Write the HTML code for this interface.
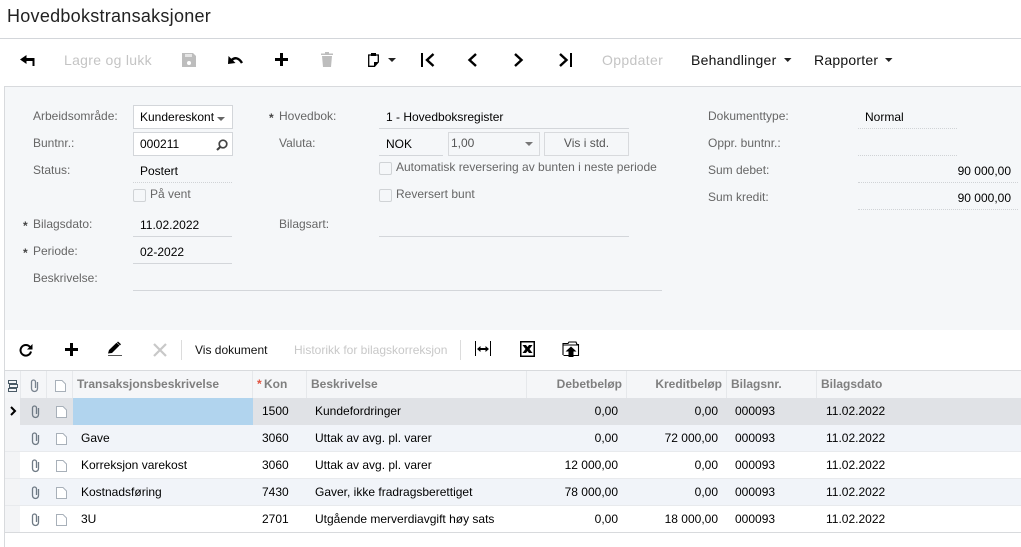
<!DOCTYPE html>
<html lang="no"><head><meta charset="utf-8"><title>Hovedbokstransaksjoner</title>
<style>
html,body{margin:0;padding:0;background:#fff}
body{width:1021px;height:547px;position:relative;overflow:hidden;font-family:"Liberation Sans",sans-serif;font-size:12px;color:#000}
.t{position:absolute;white-space:nowrap;line-height:14px;height:14px}
.l{color:#666}
.r{text-align:right}
.b{position:absolute}
.h{position:absolute;height:1px;background:#d3d6da}
.d{position:absolute;height:0;border-top:1px dotted #d0d3d6}
.cb{position:absolute;width:11px;height:11px;border:1px solid #d0d3d6;border-radius:2px;background:#f5f7f9}
.hd{font-weight:bold;color:#7f7f7f}
.v{position:absolute;width:1px;background:#e6e8eb}
.ast{color:#444;font-weight:bold}
svg{position:absolute;overflow:visible}
</style></head><body>
<div class="t" style="left:7px;top:6px;font-size:18px;line-height:21px;height:21px;color:#222;letter-spacing:.27px">Hovedbokstransaksjoner</div>
<div class="h" style="left:0;top:38px;width:1021px"></div>

<!-- main toolbar -->
<svg style="left:20px;top:53px" width="15" height="14"><path d="M0 6.500L6.500 2V5H14.500V13H12.500V8H6.500V11Z" fill="#000"/></svg>
<div class="t" style="left:64px;top:52px;font-size:14px;line-height:16px;height:16px;color:#c4c4c4;letter-spacing:.3px">Lagre og lukk</div>
<svg style="left:182px;top:53px" width="14" height="14"><path d="M0 0H11L14 3V14H0Z" fill="#bdbdbd"/><rect x="3" y="1" width="7" height="3" fill="#e6e6e6"/><circle cx="7" cy="10" r="2" fill="#fff"/></svg>
<svg style="left:228px;top:54px" width="15" height="12"><path d="M3 6.500Q9 1 14 9" fill="none" stroke="#000" stroke-width="2.400"/><path d="M0 10L.5 2L7.500 9Z" fill="#000"/></svg>
<svg style="left:275px;top:53px" width="13" height="13"><path d="M5 0H8V5H13V8H8V13H5V8H0V5H5Z" fill="#000"/></svg>
<svg style="left:321px;top:52px" width="12" height="15"><path d="M4 0H8V1.500H12V3H0V1.500H4Z" fill="#bdbdbd"/><path d="M1 4H11L10 15H2Z" fill="#bdbdbd"/></svg>
<svg style="left:368px;top:52px" width="11" height="15"><path d="M3.500 3H0.700V14.300H6.500L10.300 10V3H7.500" fill="none" stroke="#000" stroke-width="1.300"/><rect x="3" y="1" width="5" height="3" fill="#000"/><path d="M6 14.500V10H10.500Z" fill="#000"/></svg>
<svg style="left:388px;top:58px" width="8" height="4"><path d="M0 0H8L4 4Z" fill="#222"/></svg>
<svg style="left:421px;top:53px" width="14" height="14"><rect x="0" y="0" width="2" height="14" fill="#000"/><path d="M12.500 1L6 7L12.500 13" fill="none" stroke="#000" stroke-width="2.400"/></svg>
<svg style="left:467px;top:53px" width="10" height="14"><path d="M9 1L2.500 7L9 13" fill="none" stroke="#000" stroke-width="2.400"/></svg>
<svg style="left:514px;top:53px" width="10" height="14"><path d="M1 1L7.500 7L1 13" fill="none" stroke="#000" stroke-width="2.400"/></svg>
<svg style="left:559px;top:53px" width="14" height="14"><path d="M1 1L7.500 7L1 13" fill="none" stroke="#000" stroke-width="2.400"/><rect x="11" y="0" width="2" height="14" fill="#000"/></svg>
<div class="t" style="left:602px;top:52px;font-size:14px;line-height:16px;height:16px;color:#c4c4c4;letter-spacing:.35px">Oppdater</div>
<div class="t" style="left:691px;top:52px;font-size:14px;line-height:16px;height:16px;color:#111;letter-spacing:.25px">Behandlinger</div>
<svg style="left:784px;top:58px" width="7" height="4"><path d="M0 0H7.500L3.750 4Z" fill="#222"/></svg>
<div class="t" style="left:814px;top:52px;font-size:14px;line-height:16px;height:16px;color:#111;letter-spacing:.22px">Rapporter</div>
<svg style="left:885px;top:58px" width="7" height="4"><path d="M0 0H7.500L3.750 4Z" fill="#222"/></svg>

<!-- form panel -->
<div class="b" style="left:4px;top:86px;width:1017px;height:244px;background:#f5f7f9;border-top:1px solid #d8dadd;border-left:1px solid #d8dadd;box-sizing:border-box"></div>

<div class="t l" style="left:33px;top:109px">Arbeidsområde:</div>
<div class="b" style="left:133px;top:105px;width:98px;height:22px;background:#fff;border:1px solid #d3d6da"></div>
<div class="t" style="left:140px;top:110px">Kundereskont</div>
<svg style="left:217px;top:117px" width="8" height="4"><path d="M0 0H8L4 4Z" fill="#666"/></svg>

<div class="t l" style="left:33px;top:136px">Buntnr.:</div>
<div class="b" style="left:133px;top:132px;width:98px;height:22px;background:#fff;border:1px solid #d3d6da"></div>
<div class="t" style="left:140px;top:137px">000211</div>
<svg style="left:216px;top:139px" width="12" height="12"><circle cx="7" cy="5" r="3.800" fill="none" stroke="#444" stroke-width="1.700"/><path d="M4.200 8L1 11" stroke="#444" stroke-width="2.200"/></svg>

<div class="t l" style="left:33px;top:163px">Status:</div>
<div class="t" style="left:140px;top:164px">Postert</div>
<div class="d" style="left:133px;top:182px;width:99px"></div>
<div class="cb" style="left:133px;top:189px"></div>
<div class="t l" style="left:150px;top:187px">På vent</div>

<div class="t l" style="left:33px;top:217px">Bilagsdato:</div>
<div class="t ast" style="left:23px;top:219px">*</div>
<div class="t" style="left:140px;top:218px">11.02.2022</div>
<div class="h" style="left:133px;top:236px;width:99px"></div>

<div class="t l" style="left:33px;top:244px">Periode:</div>
<div class="t ast" style="left:23px;top:246px">*</div>
<div class="t" style="left:140px;top:245px">02-2022</div>
<div class="h" style="left:133px;top:263px;width:99px"></div>

<div class="t l" style="left:33px;top:271px">Beskrivelse:</div>
<div class="h" style="left:133px;top:290px;width:529px"></div>

<div class="t l" style="left:279px;top:109px">Hovedbok:</div>
<div class="t ast" style="left:269px;top:111px">*</div>
<div class="t" style="left:386px;top:110px">1 - Hovedboksregister</div>
<div class="h" style="left:379px;top:128px;width:250px"></div>

<div class="t l" style="left:279px;top:136px">Valuta:</div>
<div class="t" style="left:386px;top:137px">NOK</div>
<div class="h" style="left:379px;top:155px;width:64px"></div>
<div class="b" style="left:448px;top:132px;width:90px;height:22px;border:1px solid #d8dadd;background:#f5f7f9"></div>
<div class="t" style="left:451px;top:136px;color:#555">1,00</div>
<svg style="left:525px;top:142px" width="8" height="4"><path d="M0 0H8L4 4Z" fill="#777"/></svg>
<div class="b" style="left:544px;top:132px;width:83px;height:22px;border:1px solid #d8dadd;background:#f5f7f9"></div>
<div class="t" style="left:544px;top:136px;width:85px;text-align:center;color:#555">Vis i std.</div>

<div class="cb" style="left:379px;top:162px"></div>
<div class="t l" style="left:396px;top:160px">Automatisk reversering av bunten i neste periode</div>
<div class="cb" style="left:379px;top:189px"></div>
<div class="t l" style="left:396px;top:187px">Reversert bunt</div>

<div class="t l" style="left:279px;top:217px">Bilagsart:</div>
<div class="h" style="left:379px;top:236px;width:250px"></div>

<div class="t l" style="left:708px;top:109px">Dokumenttype:</div>
<div class="t" style="left:865px;top:110px">Normal</div>
<div class="d" style="left:858px;top:128px;width:99px"></div>
<div class="t l" style="left:708px;top:136px">Oppr. buntnr.:</div>
<div class="d" style="left:858px;top:155px;width:99px"></div>
<div class="t l" style="left:708px;top:163px">Sum debet:</div>
<div class="t r" style="left:900px;top:164px;width:111px">90 000,00</div>
<div class="d" style="left:858px;top:182px;width:160px"></div>
<div class="t l" style="left:708px;top:190px">Sum kredit:</div>
<div class="t r" style="left:900px;top:191px;width:111px">90 000,00</div>
<div class="d" style="left:858px;top:209px;width:160px"></div>

<!-- grid toolbar -->
<div class="b" style="left:4px;top:330px;width:1px;height:217px;background:#d8dadd"></div>
<svg style="left:19px;top:343px" width="14" height="14"><path d="M11 4A5.300 5.300 0 1 0 12 8.500" fill="none" stroke="#000" stroke-width="2"/><path d="M13.500 1V6.500H8Z" fill="#000"/></svg>
<svg style="left:65px;top:343px" width="13" height="13"><path d="M5 0H8V5H13V8H8V13H5V8H0V5H5Z" fill="#000"/></svg>
<svg style="left:108px;top:342px" width="15" height="15"><path d="M0 11.500L1 8L8.500 .8L11.500 3.500L4 11Z" fill="#000"/><path d="M9.500 0L12.500 2.800" stroke="#000" stroke-width="1.500"/><rect x="0" y="13" width="14" height="1" fill="#555"/></svg>
<svg style="left:153px;top:343px" width="14" height="14"><path d="M1 1L13 13M13 1L1 13" stroke="#c8c8c8" stroke-width="2.200"/></svg>
<div class="b" style="left:181px;top:340px;width:1px;height:20px;background:#dcdcdc"></div>
<div class="t" style="left:195px;top:343px;color:#111">Vis dokument</div>
<div class="t" style="left:294px;top:343px;color:#c8c8c8">Historikk for bilagskorreksjon</div>
<div class="b" style="left:460px;top:340px;width:1px;height:20px;background:#dcdcdc"></div>
<svg style="left:475px;top:341px" width="17" height="16"><rect x="0" y="0" width="1" height="15" fill="#000"/><rect x="15" y="0" width="1" height="15" fill="#000"/><path d="M2 8L5.500 5V7H10.500V5L14 8L10.500 11V9H5.500V11Z" fill="#000"/></svg>
<svg style="left:520px;top:341px" width="16" height="16"><rect x=".75" y=".75" width="13.500" height="14.500" fill="#fff" stroke="#000" stroke-width="1.500"/><path d="M2.500 4H6L7.500 6L9 4H12.500L9.500 8L12.500 12H9L7.500 10L6 12H2.500L5.500 8Z" fill="#000"/></svg>
<svg style="left:562px;top:341px" width="18" height="17"><path d="M1 14V2.500H6L7 1H14L15 3.500H16.500V14.500H1.500" fill="none" stroke="#000" stroke-width="1.100"/><rect x="1" y="3.500" width="15.500" height="1" fill="#000"/><path d="M9 5.500L14.500 10.500H11.500V16H6.500V10.500H3.500Z" fill="#000"/></svg>

<!-- grid header -->
<div class="h" style="left:5px;top:370px;width:1016px;background:#d8dadd"></div>
<div class="b" style="left:5px;top:371px;width:1016px;height:27px;background:#f5f6f8"></div>
<div class="v" style="left:20px;top:371px;height:27px"></div>
<div class="v" style="left:46px;top:371px;height:27px"></div>
<div class="v" style="left:72px;top:371px;height:27px"></div>
<div class="v" style="left:252px;top:371px;height:27px"></div>
<div class="v" style="left:306px;top:371px;height:27px"></div>
<div class="v" style="left:526px;top:371px;height:27px"></div>
<div class="v" style="left:626px;top:371px;height:27px"></div>
<div class="v" style="left:726px;top:371px;height:27px"></div>
<div class="v" style="left:816px;top:371px;height:27px"></div>

<svg style="left:8px;top:380px" width="11" height="12"><g fill="none" stroke="#4a5a66" stroke-width="1"><rect x=".5" y=".5" width="8" height="3"/><rect x="1.500" y="4.500" width="8" height="3"/><rect x=".5" y="8.500" width="8" height="3"/></g></svg>
<svg style="left:30px;top:379px" width="9" height="13"><path d="M7.500 3V9.500A3 3 0 0 1 1.500 9.500V3A2 2 0 0 1 5.500 3V9" fill="none" stroke="#7a8490" stroke-width="1.300"/></svg>
<svg style="left:55px;top:380px" width="11" height="12"><path d="M.5 .5H7L10.500 4V11.500H.5Z" fill="#fff" stroke="#a8b0b9"/></svg>
<div class="t hd" style="left:77px;top:377px">Transaksjonsbeskrivelse</div>
<div class="t" style="left:257px;top:377px;color:#e0523f;font-weight:bold">*</div>
<div class="t hd" style="left:264px;top:377px">Kon</div>
<div class="t hd" style="left:311px;top:377px">Beskrivelse</div>
<div class="t hd r" style="left:526px;top:377px;width:96px">Debetbeløp</div>
<div class="t hd r" style="left:626px;top:377px;width:96px">Kreditbeløp</div>
<div class="t hd" style="left:731px;top:377px">Bilagsnr.</div>
<div class="t hd" style="left:821px;top:377px">Bilagsdato</div>

<!-- rows -->
<div class="b" style="left:5px;top:398px;width:15px;height:135px;background:#f3f4f6"></div>
<div class="b" style="left:20px;top:398px;width:1001px;height:27px;background:#e0e2e6"></div>
<div class="b" style="left:73px;top:398px;width:180px;height:27px;background:#b1d4ee"></div>
<div class="b" style="left:20px;top:425px;width:1001px;height:26px;background:#f1f4f9"></div>
<div class="b" style="left:20px;top:479px;width:1001px;height:26px;background:#f1f4f9"></div>
<div class="h" style="left:5px;top:451px;width:1016px;background:#e8eaed"></div>
<div class="h" style="left:5px;top:478px;width:1016px;background:#e8eaed"></div>
<div class="h" style="left:5px;top:505px;width:1016px;background:#e8eaed"></div>
<div class="h" style="left:5px;top:532px;width:1016px;background:#d8dadd"></div>
<svg style="left:10px;top:406px" width="7" height="10"><path d="M1 1L5 5L1 9" fill="none" stroke="#000" stroke-width="2"/></svg>

<svg style="left:31px;top:405px" width="9" height="13"><path d="M7.500 3V9.500A3 3 0 0 1 1.500 9.500V3A2 2 0 0 1 5.500 3V9" fill="none" stroke="#6f7a85" stroke-width="1.300"/></svg>
<svg style="left:56px;top:406px" width="11" height="12"><path d="M.5 .5H7L10.500 4V11.500H.5Z" fill="#fff" stroke="#a8b0b9"/></svg>
<svg style="left:31px;top:432px" width="9" height="13"><path d="M7.500 3V9.500A3 3 0 0 1 1.500 9.500V3A2 2 0 0 1 5.500 3V9" fill="none" stroke="#6f7a85" stroke-width="1.300"/></svg>
<svg style="left:56px;top:433px" width="11" height="12"><path d="M.5 .5H7L10.500 4V11.500H.5Z" fill="#fff" stroke="#a8b0b9"/></svg>
<svg style="left:31px;top:459px" width="9" height="13"><path d="M7.500 3V9.500A3 3 0 0 1 1.500 9.500V3A2 2 0 0 1 5.500 3V9" fill="none" stroke="#6f7a85" stroke-width="1.300"/></svg>
<svg style="left:56px;top:460px" width="11" height="12"><path d="M.5 .5H7L10.500 4V11.500H.5Z" fill="#fff" stroke="#a8b0b9"/></svg>
<svg style="left:31px;top:486px" width="9" height="13"><path d="M7.500 3V9.500A3 3 0 0 1 1.500 9.500V3A2 2 0 0 1 5.500 3V9" fill="none" stroke="#6f7a85" stroke-width="1.300"/></svg>
<svg style="left:56px;top:487px" width="11" height="12"><path d="M.5 .5H7L10.500 4V11.500H.5Z" fill="#fff" stroke="#a8b0b9"/></svg>
<svg style="left:31px;top:513px" width="9" height="13"><path d="M7.500 3V9.500A3 3 0 0 1 1.500 9.500V3A2 2 0 0 1 5.500 3V9" fill="none" stroke="#6f7a85" stroke-width="1.300"/></svg>
<svg style="left:56px;top:514px" width="11" height="12"><path d="M.5 .5H7L10.500 4V11.500H.5Z" fill="#fff" stroke="#a8b0b9"/></svg>

<div class="t" style="left:262px;top:404px">1500</div>
<div class="t" style="left:315px;top:404px">Kundefordringer</div>
<div class="t r" style="left:526px;top:404px;width:92px">0,00</div>
<div class="t r" style="left:626px;top:404px;width:92px">0,00</div>
<div class="t" style="left:735px;top:404px">000093</div>
<div class="t" style="left:826px;top:404px">11.02.2022</div>

<div class="t" style="left:81px;top:431px">Gave</div>
<div class="t" style="left:262px;top:431px">3060</div>
<div class="t" style="left:315px;top:431px">Uttak av avg. pl. varer</div>
<div class="t r" style="left:526px;top:431px;width:92px">0,00</div>
<div class="t r" style="left:626px;top:431px;width:92px">72 000,00</div>
<div class="t" style="left:735px;top:431px">000093</div>
<div class="t" style="left:826px;top:431px">11.02.2022</div>

<div class="t" style="left:81px;top:458px">Korreksjon varekost</div>
<div class="t" style="left:262px;top:458px">3060</div>
<div class="t" style="left:315px;top:458px">Uttak av avg. pl. varer</div>
<div class="t r" style="left:526px;top:458px;width:92px">12 000,00</div>
<div class="t r" style="left:626px;top:458px;width:92px">0,00</div>
<div class="t" style="left:735px;top:458px">000093</div>
<div class="t" style="left:826px;top:458px">11.02.2022</div>

<div class="t" style="left:81px;top:485px">Kostnadsføring</div>
<div class="t" style="left:262px;top:485px">7430</div>
<div class="t" style="left:315px;top:485px">Gaver, ikke fradragsberettiget</div>
<div class="t r" style="left:526px;top:485px;width:92px">78 000,00</div>
<div class="t r" style="left:626px;top:485px;width:92px">0,00</div>
<div class="t" style="left:735px;top:485px">000093</div>
<div class="t" style="left:826px;top:485px">11.02.2022</div>

<div class="t" style="left:81px;top:512px">3U</div>
<div class="t" style="left:262px;top:512px">2701</div>
<div class="t" style="left:315px;top:512px">Utgående merverdiavgift høy sats</div>
<div class="t r" style="left:526px;top:512px;width:92px">0,00</div>
<div class="t r" style="left:626px;top:512px;width:92px">18 000,00</div>
<div class="t" style="left:735px;top:512px">000093</div>
<div class="t" style="left:826px;top:512px">11.02.2022</div>
</body></html>
